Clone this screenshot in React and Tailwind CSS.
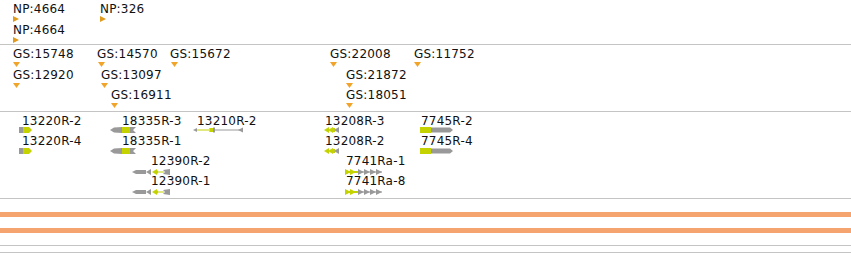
import React from 'react';

const YEL = '#c4d300';
const GRY = '#999999';

const npLabels = [
  { text: 'NP:4664', x: 13, y: 2, tx: 13, ty: 16 },
  { text: 'NP:326', x: 100, y: 2, tx: 100, ty: 16 },
  { text: 'NP:4664', x: 13, y: 23, tx: 13, ty: 37 },
];

const gsLabels = [
  { text: 'GS:15748', x: 13, y: 2, tx: 13, ty: 17 },
  { text: 'GS:14570', x: 97, y: 2, tx: 98, ty: 17 },
  { text: 'GS:15672', x: 170, y: 2, tx: 171, ty: 17 },
  { text: 'GS:22008', x: 330, y: 2, tx: 330, ty: 17 },
  { text: 'GS:11752', x: 414, y: 2, tx: 414, ty: 17 },
  { text: 'GS:12920', x: 13, y: 23, tx: 13, ty: 38 },
  { text: 'GS:13097', x: 101, y: 23, tx: 101, ty: 38 },
  { text: 'GS:21872', x: 346, y: 23, tx: 346, ty: 38 },
  { text: 'GS:16911', x: 111, y: 43, tx: 111, ty: 58 },
  { text: 'GS:18051', x: 346, y: 43, tx: 346, ty: 58 },
];

const genes = [
  { text: '13220R-2', x: 22, y: 2, g: 'a', gx: 19, gy: 15 },
  { text: '13220R-4', x: 22, y: 22, g: 'a', gx: 19, gy: 36 },
  { text: '18335R-3', x: 122, y: 2, g: 'b', gx: 110, gy: 15 },
  { text: '18335R-1', x: 122, y: 22, g: 'b', gx: 110, gy: 36 },
  { text: '13210R-2', x: 197, y: 2, g: 'c', gx: 193, gy: 15 },
  { text: '12390R-2', x: 151, y: 42, g: 'd', gx: 132, gy: 57 },
  { text: '12390R-1', x: 151, y: 62, g: 'd', gx: 132, gy: 77 },
  { text: '13208R-3', x: 325, y: 2, g: 'e', gx: 324, gy: 15 },
  { text: '13208R-2', x: 325, y: 22, g: 'e', gx: 324, gy: 36 },
  { text: '7745R-2', x: 421, y: 2, g: 'f', gx: 420, gy: 15 },
  { text: '7745R-4', x: 421, y: 22, g: 'f', gx: 420, gy: 36 },
  { text: '7741Ra-1', x: 346, y: 42, g: 'g', gx: 345, gy: 57 },
  { text: '7741Ra-8', x: 346, y: 62, g: 'g', gx: 345, gy: 77 },
];

const TriRight = () => (
  <svg width="6" height="6" viewBox="0 0 6 6">
    <polygon points="0,0 6,3 0,6" fill="#e09a1c" />
  </svg>
);

const TriDown = () => (
  <svg width="7" height="5" viewBox="0 0 7 5">
    <polygon points="0,0 7,0 3.5,5" fill="#f0a42a" />
  </svg>
);

const Glyph = ({ type }) => {
  if (type === 'a')
    return (
      <svg width="14" height="6" viewBox="0 0 14 6">
        <rect x="0" y="0" width="4" height="6" fill={GRY} />
        <polygon points="4,0 10,0 13,3 10,6 4,6" fill={YEL} />
      </svg>
    );
  if (type === 'b')
    return (
      <svg width="27" height="6" viewBox="0 0 27 6">
        <polygon points="0,3 4,0.5 12,0 12,6 4,5.5" fill={GRY} />
        <rect x="12" y="0" width="8" height="6" fill={YEL} />
        <polygon points="20,0 26,0 23,3 26,6 20,6" fill={GRY} />
      </svg>
    );
  if (type === 'c')
    return (
      <svg width="52" height="6" viewBox="0 0 52 6">
        <polygon points="0,3 4,1 4,5" fill={GRY} />
        <rect x="4" y="2.5" width="16" height="1" fill={YEL} />
        <polygon points="16,1 20,1 20,5 16,5 17,3" fill={YEL} />
        <rect x="20" y="0.5" width="2" height="5" fill={GRY} />
        <rect x="22" y="2.5" width="26" height="1" fill={GRY} />
        <polygon points="45,3 50,0.5 50,5.5" fill={GRY} />
      </svg>
    );
  if (type === 'd')
    return (
      <svg width="39" height="6" viewBox="0 0 39 6">
        <polygon points="0,3 4,1 14,1 14,5 4,5" fill={GRY} />
        <polygon points="14,3 19,0 19,6" fill={GRY} />
        <polygon points="20,3 25,0 25,6" fill={YEL} />
        <rect x="24" y="1.5" width="2" height="3" fill={YEL} />
        <rect x="26" y="2.5" width="6" height="1" fill={YEL} />
        <polygon points="31,1 38,0 38,6 31,5 33,3" fill={GRY} />
      </svg>
    );
  if (type === 'e')
    return (
      <svg width="16" height="6" viewBox="0 0 16 6">
        <polygon points="0,3 5,0 5,6" fill={YEL} />
        <polygon points="4,3 9,0 9,6" fill={YEL} />
        <rect x="8" y="1" width="3" height="4" fill={YEL} />
        <polygon points="10,3 15,0 15,6" fill={GRY} />
      </svg>
    );
  if (type === 'f')
    return (
      <svg width="34" height="6" viewBox="0 0 34 6">
        <rect x="0" y="0" width="11" height="6" fill={YEL} />
        <polygon points="11,0.5 30,0.5 33,3 30,5.5 11,5.5" fill={GRY} />
      </svg>
    );
  return (
    <svg width="38" height="6" viewBox="0 0 38 6">
      <polygon points="0,0 6,3 0,6" fill={YEL} />
      <polygon points="5,0 11,3 5,6" fill={YEL} />
      <rect x="0" y="2" width="13" height="2" fill={YEL} />
      <rect x="13" y="2.5" width="24" height="1" fill={GRY} />
      <polygon points="13,0 19,3 13,6" fill={GRY} />
      <polygon points="19,0 25,3 19,6" fill={GRY} />
      <polygon points="25,0 31,3 25,6" fill={GRY} />
      <polygon points="31,0 37,3 31,6" fill={GRY} />
    </svg>
  );
};

const Label = ({ text, x, y }) => (
  <span
    className="absolute whitespace-nowrap text-[12px] leading-[14px] tracking-[0.2px] text-[#111]"
    style={{ left: x, top: y }}
  >
    {text}
  </span>
);

const Marker = ({ x, y, children }) => (
  <div className="absolute flex" style={{ left: x, top: y }}>
    {children}
  </div>
);

export default function App() {
  return (
    <div className="w-[851px] h-[254px] bg-white overflow-hidden font-['DejaVu_Sans',sans-serif] flex flex-col">
      <div className="relative h-[45px] shrink-0 border-b border-[#c4c4c4]">
        {npLabels.map((l, i) => (
          <React.Fragment key={i}>
            <Label text={l.text} x={l.x} y={l.y} />
            <Marker x={l.tx} y={l.ty}>
              <TriRight />
            </Marker>
          </React.Fragment>
        ))}
      </div>
      <div className="relative h-[67px] shrink-0 border-b border-[#c4c4c4]">
        {gsLabels.map((l, i) => (
          <React.Fragment key={i}>
            <Label text={l.text} x={l.x} y={l.y} />
            <Marker x={l.tx} y={l.ty}>
              <TriDown />
            </Marker>
          </React.Fragment>
        ))}
      </div>
      <div className="relative h-[87px] shrink-0 border-b border-[#c4c4c4]">
        {genes.map((l, i) => (
          <React.Fragment key={i}>
            <Label text={l.text} x={l.x} y={l.y} />
            <Marker x={l.gx} y={l.gy}>
              <Glyph type={l.g} />
            </Marker>
          </React.Fragment>
        ))}
      </div>
      <div className="flex flex-col">
        <div className="h-[13px]" />
        <div className="h-[5px] bg-[#f5a470]" />
        <div className="h-[11px]" />
        <div className="h-[5px] bg-[#f5a470]" />
        <div className="h-[13px] border-b border-[#c4c4c4]" />
        <div className="h-[7px] border-b border-[#c4c4c4]" />
      </div>
    </div>
  );
}
